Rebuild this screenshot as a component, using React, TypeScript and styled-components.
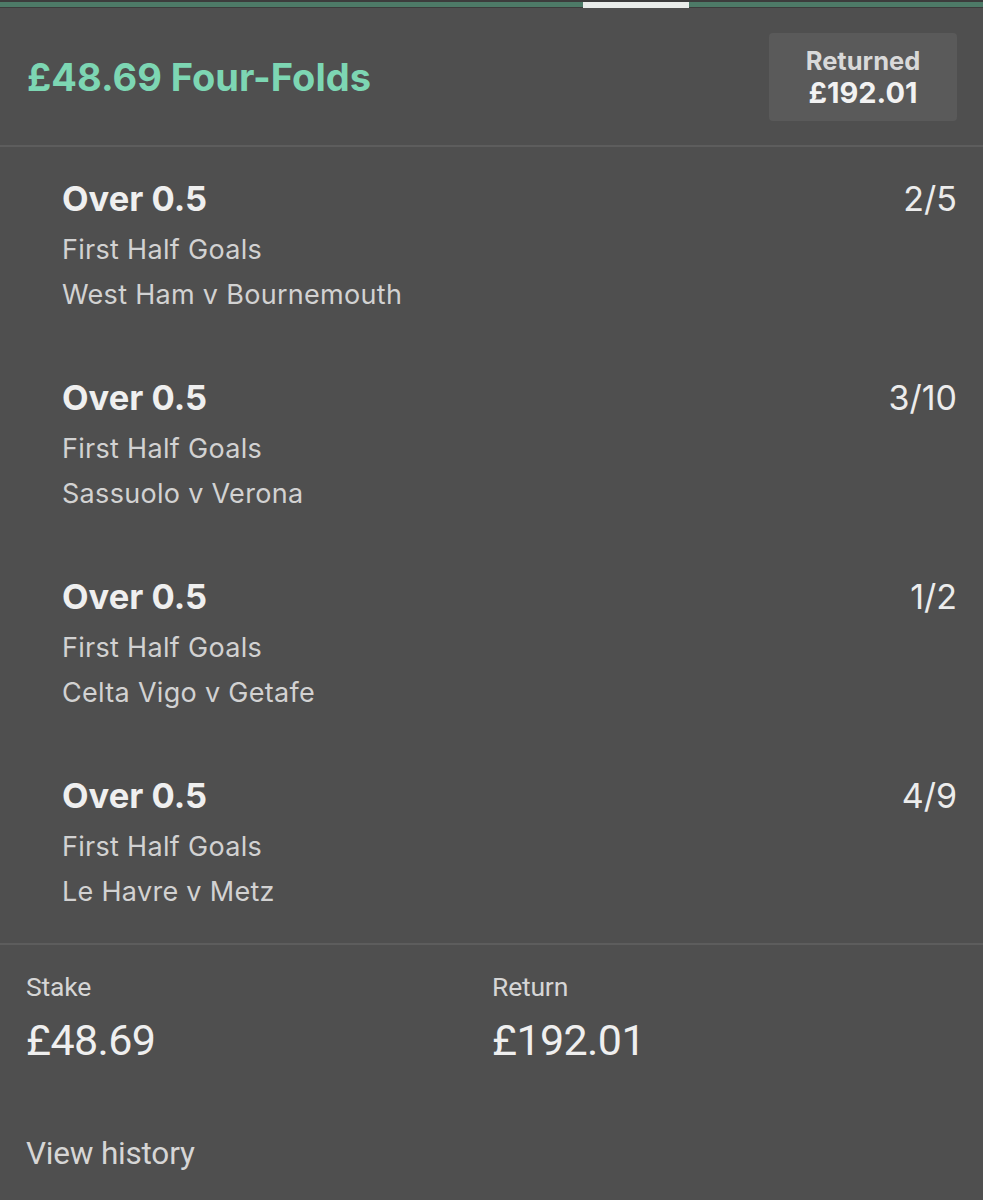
import React from "react";
import styled, { createGlobalStyle } from "styled-components";

const Global = createGlobalStyle`
  html, body { margin: 0; padding: 0; background: #4f4f4f; }
  body { font-family: Inter, "Noto Sans", sans-serif; -webkit-font-smoothing: antialiased; }
`;

const Page = styled.div`
  width: 983px;
  height: 1200px;
  background: #4f4f4f;
  overflow: hidden;
  display: flex;
  flex-direction: column;
`;

const TopBar = styled.div`
  flex-shrink: 0;
  height: 8px;
  background: #3c3c3c;
  display: flex;
  align-items: flex-start;
  padding-top: 2px;
  box-sizing: border-box;
`;

const Track = styled.div<{ $w: number; $active?: boolean }>`
  width: ${(p) => p.$w}px;
  height: ${(p) => (p.$active ? 6 : 5)}px;
  background: ${(p) => (p.$active ? "#e9ecea" : "#4d7a67")};
`;

const Header = styled.div`
  flex-shrink: 0;
  height: 139px;
  display: flex;
  align-items: center;
  justify-content: space-between;
  padding: 0 26px 0 27px;
  box-sizing: border-box;
  border-bottom: 2px solid #5d5d5d;
`;

const Title = styled.div`
  color: #7dd6b3;
  font-size: 38px;
  font-weight: 700;
  letter-spacing: 0px;
`;

const ReturnedBox = styled.div`
  width: 188px;
  height: 88px;
  background: #5a5a5a;
  border-radius: 4px;
  display: flex;
  flex-direction: column;
  align-items: center;
  justify-content: center;
`;

const BoxLabel = styled.div`
  color: #d9d9d9;
  font-size: 25.5px;
  font-weight: 700;
  line-height: 31px;
`;

const BoxValue = styled.div`
  color: #f2f2f2;
  font-size: 29px;
  font-weight: 700;
  line-height: 33px;
`;

const List = styled.div`
  flex-shrink: 0;
  display: flex;
  flex-direction: column;
  padding: 0 26px 0 62px;
  border-bottom: 2px solid #5d5d5d;
`;

const Leg = styled.div`
  flex-shrink: 0;
  height: 199px;
  box-sizing: border-box;
  padding-top: 32px;
  display: flex;
  justify-content: space-between;
  align-items: flex-start;
`;

const LegInfo = styled.div`
  display: flex;
  flex-direction: column;
`;

const Selection = styled.div`
  color: #efefef;
  font-size: 34.5px;
  font-weight: 700;
  line-height: 40px;
  margin-bottom: 8px;
`;

const SubLine = styled.div`
  color: #d2d2d2;
  font-size: 27px;
  font-weight: 400;
  line-height: 45px;
  letter-spacing: 0.3px;
`;

const Odds = styled.div`
  color: #ececec;
  font-size: 34px;
  font-weight: 400;
  line-height: 40px;
`;

const Footer = styled.div`
  display: flex;
  flex-direction: column;
  padding: 27px 26px 0 26px;
`;

const Totals = styled.div`
  display: grid;
  grid-template-columns: 466px 1fr;
`;

const TotalCol = styled.div`
  display: flex;
  flex-direction: column;
`;

const TotalLabel = styled.div`
  color: #d6d6d6;
  font-family: Roboto, "Liberation Sans", sans-serif;
  font-size: 26.5px;
  line-height: 30px;
  letter-spacing: -0.2px;
`;

const TotalValue = styled.div`
  color: #efefef;
  font-family: Roboto, "Liberation Sans", sans-serif;
  font-size: 43px;
  line-height: 50px;
  margin-top: 13px;
  letter-spacing: -0.6px;
`;

const HistoryLink = styled.div`
  color: #d6d6d6;
  font-family: Roboto, "Liberation Sans", sans-serif;
  font-size: 31.5px;
  line-height: 36px;
  margin-top: 71px;
  letter-spacing: -0.2px;
`;

const legs = [
  { sel: "Over 0.5", market: "First Half Goals", event: "West Ham v Bournemouth", odds: "2/5" },
  { sel: "Over 0.5", market: "First Half Goals", event: "Sassuolo v Verona", odds: "3/10" },
  { sel: "Over 0.5", market: "First Half Goals", event: "Celta Vigo v Getafe", odds: "1/2" },
  { sel: "Over 0.5", market: "First Half Goals", event: "Le Havre v Metz", odds: "4/9" },
];

export default function App() {
  return (
    <Page>
      <Global />
      <TopBar>
        <Track $w={583} />
        <Track $w={106} $active />
        <Track $w={294} />
      </TopBar>
      <Header>
        <Title>£48.69 Four-Folds</Title>
        <ReturnedBox>
          <BoxLabel>Returned</BoxLabel>
          <BoxValue>£192.01</BoxValue>
        </ReturnedBox>
      </Header>
      <List>
        {legs.map((l, i) => (
          <Leg key={i}>
            <LegInfo>
              <Selection>{l.sel}</Selection>
              <SubLine>{l.market}</SubLine>
              <SubLine>{l.event}</SubLine>
            </LegInfo>
            <Odds>{l.odds}</Odds>
          </Leg>
        ))}
      </List>
      <Footer>
        <Totals>
          <TotalCol>
            <TotalLabel>Stake</TotalLabel>
            <TotalValue>£48.69</TotalValue>
          </TotalCol>
          <TotalCol>
            <TotalLabel>Return</TotalLabel>
            <TotalValue>£192.01</TotalValue>
          </TotalCol>
        </Totals>
        <HistoryLink>View history</HistoryLink>
      </Footer>
    </Page>
  );
}
